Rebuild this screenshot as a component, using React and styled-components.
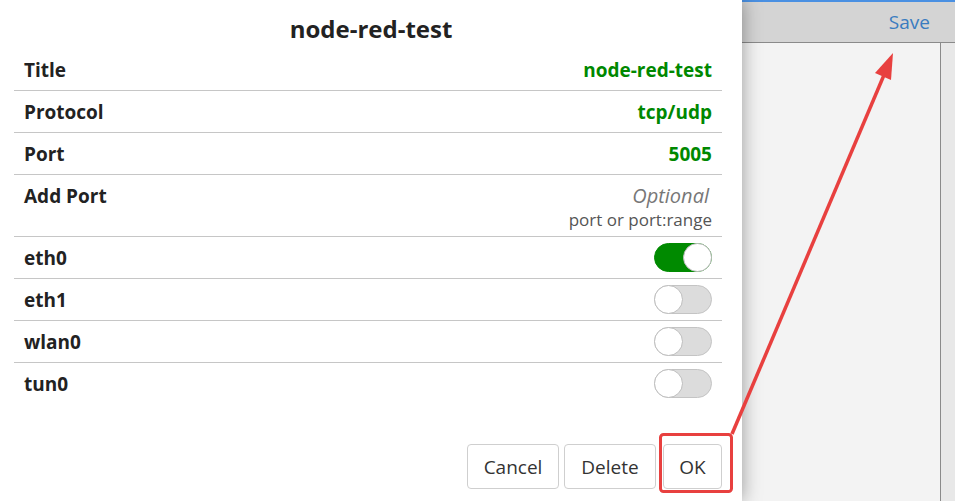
import React from "react";
import styled, { createGlobalStyle, css } from "styled-components";

const GlobalStyle = createGlobalStyle`
  html, body {
    margin: 0;
    padding: 0;
    background: #f3f3f3;
  }
  body {
    font-family: "Open Sans", "Noto Sans", "DejaVu Sans", sans-serif;
    color: #222;
  }
`;

const Page = styled.div`
  position: relative;
  display: flex;
  width: 955px;
  height: 501px;
  overflow: hidden;
`;

// the popup on the left
const Dialog = styled.div`
  position: relative;
  z-index: 1;
  width: 742px;
  flex: none;
  display: flex;
  flex-direction: column;
  background: #fff;
  box-shadow: 0 0 18px rgba(0, 0, 0, 0.38);
`;

const DialogTitle = styled.h1`
  margin: 0;
  height: 49px;
  padding-top: 15px;
  box-sizing: border-box;
  text-align: center;
  font-size: 24px;
  line-height: 28px;
  font-weight: 700;
  color: #222;
`;

const List = styled.div`
  display: flex;
  flex-direction: column;
  margin: 0 20px 0 14px;
`;

const Row = styled.div`
  display: flex;
  justify-content: space-between;
  align-items: center;
  height: 41px;
  padding: 0 10px;
  border-bottom: 1px solid #c6c6c6;

  &:last-child {
    border-bottom-color: transparent;
  }

  ${(p) =>
    p.$tall &&
    css`
      align-items: flex-start;
      padding-top: 10px;
      box-sizing: border-box;
      height: 62px;
    `}
`;

const Label = styled.span`
  font-size: 19px;
  line-height: 22px;
  font-weight: 700;
  color: #222;
`;

const Value = styled.span`
  font-size: 19px;
  line-height: 22px;
  font-weight: 700;
  color: #008800;
`;

const Field = styled.div`
  display: flex;
  flex-direction: column;
  align-items: flex-end;
`;

const Placeholder = styled.span`
  font-size: 20px;
  line-height: 22px;
  font-style: italic;
  color: #777;
  padding-right: 3px;
`;

const Hint = styled.span`
  font-size: 17px;
  line-height: 26px;
  color: #555;
`;

const Track = styled.span`
  position: relative;
  display: inline-block;
  width: 58px;
  height: 29px;
  box-sizing: border-box;
  border-radius: 15px;
  border: 1px solid ${(p) => (p.$on ? "#008a00" : "#c4c4c4")};
  background: ${(p) => (p.$on ? "#008a00" : "#dcdcdc")};
`;

const Knob = styled.span`
  position: absolute;
  top: -1px;
  ${(p) => (p.$on ? "right: -1px;" : "left: -1px;")}
  width: 29px;
  height: 29px;
  box-sizing: border-box;
  border-radius: 50%;
  background: #fff;
  border: 1px solid #bdbdbd;
`;

const Toggle = ({ on }) => (
  <Track $on={on}>
    <Knob $on={on} />
  </Track>
);

const Footer = styled.div`
  margin-top: auto;
  display: flex;
  justify-content: flex-end;
  gap: 5px;
  padding: 0 20px 12px 0;
`;

const Button = styled.button`
  height: 45px;
  width: ${(p) => p.$w}px;
  padding: 0;
  margin-left: ${(p) => p.$gap || 0}px;
  background: #fff;
  border: 1px solid #cfcfcf;
  border-radius: 4px;
  font-family: inherit;
  font-size: 19px;
  color: #333;
`;

// the editor behind the popup
const Backdrop = styled.div`
  flex: 1;
  display: flex;
  flex-direction: column;
`;

const TopBar = styled.div`
  height: 40px;
  display: flex;
  align-items: center;
  justify-content: flex-end;
  padding-right: 25px;
  background: #d4d4d4;
  border-top: 2px solid #4a90e2;
  border-bottom: 1px solid #8a8a8a;
`;

const SaveLink = styled.span`
  font-size: 19px;
  color: #3a7cc0;
`;

const Body = styled.div`
  flex: 1;
  display: flex;
`;

const Canvas = styled.div`
  flex: 1;
  background: #f3f3f3;
`;

const Scroll = styled.div`
  width: 14px;
  background: #e8e8e8;
  border-left: 1px solid #8a8a8a;
`;

const Annotation = styled.svg`
  position: absolute;
  left: 0;
  top: 0;
  z-index: 2;
  pointer-events: none;
`;

const interfaces = [
  ["eth0", true],
  ["eth1", false],
  ["wlan0", false],
  ["tun0", false],
];

export default function App() {
  return (
    <>
      <GlobalStyle />
      <Page>
        <Dialog>
          <DialogTitle>node-red-test</DialogTitle>
          <List>
            <Row>
              <Label>Title</Label>
              <Value>node-red-test</Value>
            </Row>
            <Row>
              <Label>Protocol</Label>
              <Value>tcp/udp</Value>
            </Row>
            <Row>
              <Label>Port</Label>
              <Value>5005</Value>
            </Row>
            <Row $tall>
              <Label>Add Port</Label>
              <Field>
                <Placeholder>Optional</Placeholder>
                <Hint>port or port:range</Hint>
              </Field>
            </Row>
            {interfaces.map(([name, on]) => (
              <Row key={name}>
                <Label>{name}</Label>
                <Toggle on={on} />
              </Row>
            ))}
          </List>
          <Footer>
            <Button $w={92}>Cancel</Button>
            <Button $w={92}>Delete</Button>
            <Button $w={59} $gap={2}>OK</Button>
          </Footer>
        </Dialog>
        <Backdrop>
          <TopBar>
            <SaveLink>Save</SaveLink>
          </TopBar>
          <Body>
            <Canvas />
            <Scroll />
          </Body>
        </Backdrop>
        <Annotation width="955" height="501" viewBox="0 0 955 501">
          <rect
            x="660.5"
            y="434.5"
            width="71"
            height="57"
            rx="3"
            fill="none"
            stroke="#e8403f"
            strokeWidth="3"
          />
          <line x1="732" y1="434" x2="884" y2="75" stroke="#e8403f" strokeWidth="3.5" />
          <polygon points="893,53 891,80 875,73" fill="#e8403f" />
        </Annotation>
      </Page>
    </>
  );
}
